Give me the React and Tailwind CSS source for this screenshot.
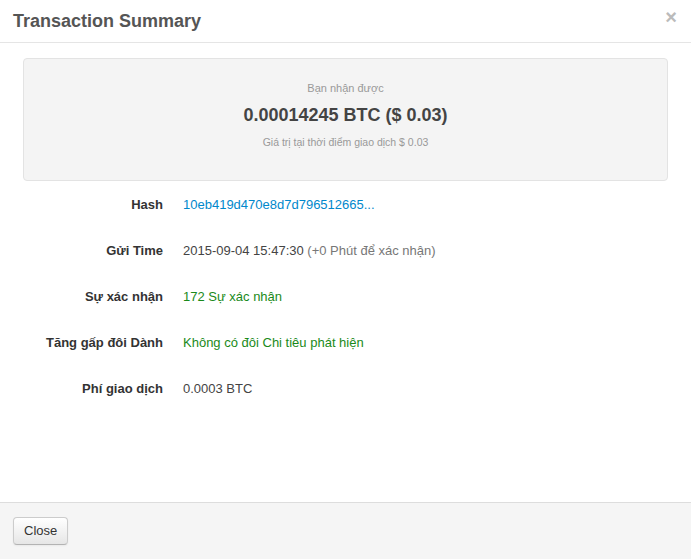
import React from 'react';

const ROWS = [
  { label: 'Hash', value: <a href="#" className="text-[#0088cc]">10eb419d470e8d7d796512665...</a> },
  {
    label: 'Gửi Time',
    value: (
      <span className="text-[#444]">
        2015-09-04 15:47:30 <span className="text-[#777]">(+0 Phút để xác nhận)</span>
      </span>
    ),
  },
  { label: 'Sự xác nhận', value: <span className="text-[#1a8a1a]">172 Sự xác nhận</span> },
  { label: 'Tăng gấp đôi Dành', value: <span className="text-[#1a8a1a]">Không có đôi Chi tiêu phát hiện</span> },
  { label: 'Phí giao dịch', value: <span className="text-[#444]">0.0003 BTC</span> },
];

export default function App() {
  return (
    <div className="w-[691px] h-[559px] bg-white flex flex-col font-['Liberation_Sans',Arial,sans-serif] text-[13px] text-[#333]">
      {/* Header */}
      <div className="h-[43px] shrink-0 border-b border-[#e5e5e5] flex items-center justify-between pl-[13px] pr-[12px]">
        <h3 className="text-[18px] font-bold text-[#555]">Transaction Summary</h3>
        <span className="text-[20px] font-bold text-[#bbb] leading-none -mt-[8px] mr-[2px]">×</span>
      </div>

      {/* Body */}
      <div className="flex-1 px-[23px] pt-[15px]">
        <div className="h-[123px] bg-[#f4f4f4] border border-[#e3e3e3] rounded-[4px] flex flex-col items-center pt-[22px]">
          <div className="text-[11px] text-[#999] leading-[14px]">Bạn nhận được</div>
          <div className="text-[18px] font-bold text-[#444] mt-[9px] leading-[22px]">0.00014245 BTC ($ 0.03)</div>
          <div className="text-[10.5px] text-[#999] mt-[9px] leading-[14px]">Giá trị tại thời điểm giao dịch $ 0.03</div>
        </div>

        <div className="flex flex-col gap-[28px] mt-[15px]">
          {ROWS.map((row) => (
            <div key={row.label} className="flex items-center h-[18px]">
              <div className="w-[140px] text-right font-bold text-[#333]">{row.label}</div>
              <div className="ml-[20px]">{row.value}</div>
            </div>
          ))}
        </div>
      </div>

      {/* Footer */}
      <div className="h-[57px] shrink-0 bg-[#f5f5f5] border-t border-[#ddd] flex items-center px-[13px]">
        <button className="h-[28px] px-[10px] text-[13px] text-[#333] rounded-[4px] border border-[#ccc] border-b-[#b3b3b3] bg-gradient-to-b from-white to-[#e6e6e6] shadow-[inset_0_1px_0_rgba(255,255,255,0.2),0_1px_2px_rgba(0,0,0,0.05)]">
          Close
        </button>
      </div>
    </div>
  );
}
